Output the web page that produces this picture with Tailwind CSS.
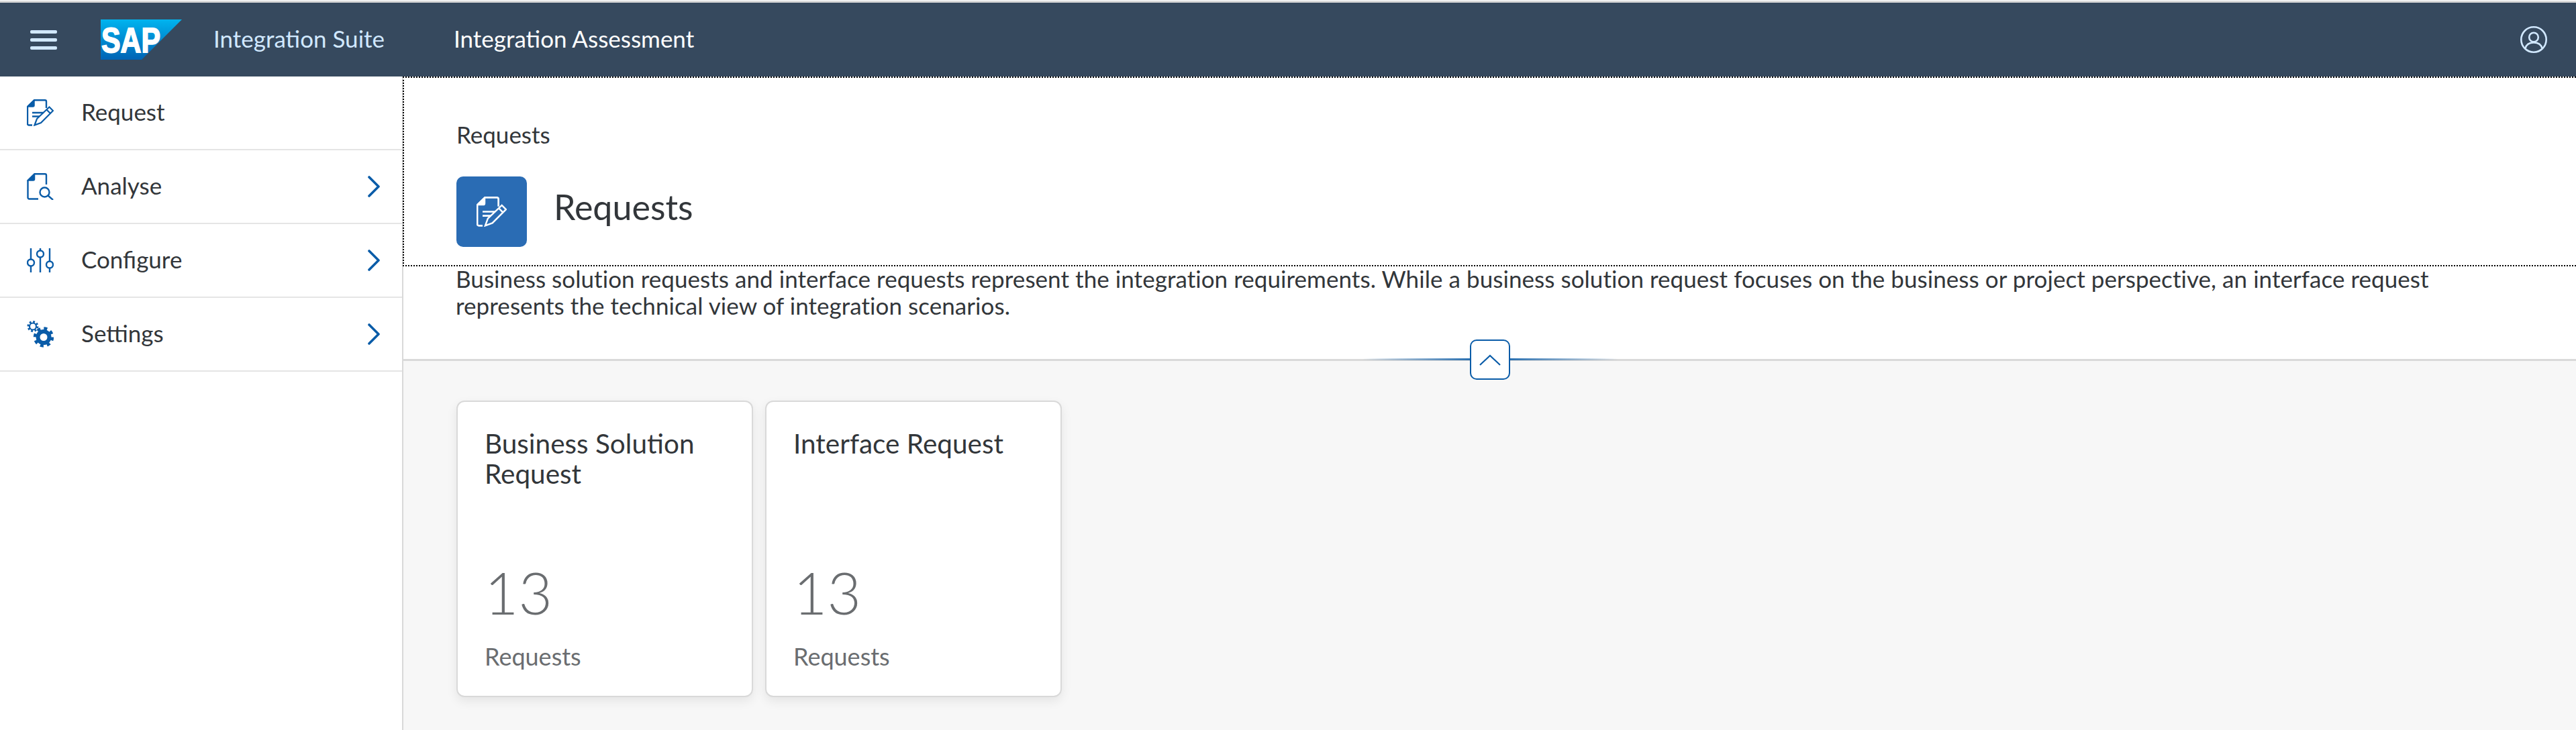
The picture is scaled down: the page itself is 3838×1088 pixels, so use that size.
<!DOCTYPE html>
<html lang="en">
<head>
  <meta charset="UTF-8">
  <title>Integration Assessment</title>
  <script src="https://cdn.jsdelivr.net/npm/@tailwindcss/browser@4"></script>
</head>
<body class="h-screen overflow-hidden bg-white font-['Lato',sans-serif] text-[#32363a]">
  <svg class="hidden">
    <symbol id="icon-request" viewBox="0 0 40 40">
      <path d="M8 38.5H3a2 2 0 0 1-2-2V11L11 1.3H27a2 2 0 0 1 2 2V13" fill="none" stroke="currentColor" stroke-width="2.4"/>
      <path d="M1 11 11 1V9a2 2 0 0 1-2 2Z" fill="currentColor" stroke="currentColor" stroke-width="1.5"/>
      <path d="M8 20H25M8 25.500H19" stroke="currentColor" stroke-width="2.4"/>
      <path d="M11.500 38.500 15 29 33.500 11.500 39 17 21 35ZM29.500 15.500 35 21" fill="none" stroke="currentColor" stroke-width="2.2"/>
    </symbol>
  </svg>

  <div class="h-[4px] border-t border-t-white bg-[#d9d9d9]"></div>

  <header class="flex h-[110px] items-center bg-[#36495e] text-[35px]">
    <button class="ml-[45px] flex w-[40px] flex-col gap-[7px]">
      <span class="h-[5px] rounded-[2px] bg-[#d1e8ff]"></span>
      <span class="h-[5px] rounded-[2px] bg-[#d1e8ff]"></span>
      <span class="h-[5px] rounded-[2px] bg-[#d1e8ff]"></span>
    </button>
    <svg class="ml-[65px]" width="121" height="60" viewBox="0 0 121 60">
      <defs>
        <linearGradient id="sapBlue" x1="0" y1="0" x2="0" y2="1">
          <stop offset="0" stop-color="#00b4ef"/>
          <stop offset="1" stop-color="#0063b4"/>
        </linearGradient>
      </defs>
      <path d="M0 0H121L61 60H0Z" fill="url(#sapBlue)"/>
      <text x="1" y="49" fill="#fff" font-family="Liberation Sans" font-weight="700" font-size="51" textLength="88" lengthAdjust="spacingAndGlyphs" stroke="#fff" stroke-width="1.800">SAP</text>
    </svg>
    <span class="mb-[3px] ml-[47px] text-[#d1e8ff]">Integration Suite</span>
    <span class="mb-[3px] ml-[103px] text-white">Integration Assessment</span>
    <svg class="mr-[43px] ml-auto" width="40" height="40" viewBox="0 0 40 40" fill="none" stroke="#d1e8ff" stroke-width="2.600">
      <circle cx="20" cy="20" r="18.700"/>
      <circle cx="20" cy="16.500" r="6.800"/>
      <path d="M7.500 33C9 27 14 24.500 20 24.500S31 27 32.500 33"/>
    </svg>
  </header>

  <div class="flex h-[974px]">
    <nav class="w-[601px] shrink-0 border-r-2 border-r-[#d9d9d9] text-[35px]">
      <a class="flex h-[110px] items-center border-b-2 border-b-[#e5e5e5] pl-[40px] text-[#32363a]">
        <svg class="text-[#0a5ca8]" width="40" height="40"><use href="#icon-request"/></svg>
        <span class="mb-[4px] ml-[41px]">Request</span>
      </a>
      <a class="flex h-[110px] items-center border-b-2 border-b-[#e5e5e5] pl-[40px]">
        <svg width="40" height="40" viewBox="0 0 40 40" fill="none" stroke="#0a5ca8" stroke-width="2.400">
          <path d="M17 38.500H3.500a2 2 0 0 1-2-2V11L11.500 1.300H27a2 2 0 0 1 2 2V17"/>
          <path d="M1.500 11 11.500 1V9a2 2 0 0 1-2 2Z" fill="#0a5ca8" stroke-width="1.500"/>
          <circle cx="26.500" cy="28.500" r="7"/>
          <path d="M31.500 33.500 39 40"/>
        </svg>
        <span class="mb-[4px] ml-[41px]">Analyse</span>
        <svg class="mr-[33px] ml-auto" width="18" height="32" viewBox="0 0 18 32" fill="none" stroke="#0a5ca8" stroke-width="3.600" stroke-linecap="round" stroke-linejoin="round"><path d="M2 2 16 16 2 30"/></svg>
      </a>
      <a class="flex h-[110px] items-center border-b-2 border-b-[#e5e5e5] pl-[40px]">
        <svg width="40" height="36" viewBox="0 0 40 36" fill="none" stroke="#0a5ca8" stroke-width="2.400">
          <path d="M6 0V16M6 27V36M20 0V3M20 14V36M34 0V19M34 30V36"/>
          <circle cx="6" cy="21.500" r="5"/>
          <circle cx="20" cy="8.500" r="5"/>
          <circle cx="34" cy="24.500" r="5"/>
        </svg>
        <span class="mb-[4px] ml-[41px]">Configure</span>
        <svg class="mr-[33px] ml-auto" width="18" height="32" viewBox="0 0 18 32" fill="none" stroke="#0a5ca8" stroke-width="3.600" stroke-linecap="round" stroke-linejoin="round"><path d="M2 2 16 16 2 30"/></svg>
      </a>
      <a class="flex h-[110px] items-center border-b-2 border-b-[#e5e5e5] pl-[40px]">
        <svg width="40" height="40" viewBox="0 0 40 40" fill="none" stroke="#0a5ca8">
          <circle cx="9" cy="8.500" r="5" stroke-width="2.200"/>
          <circle cx="9" cy="8.500" r="7" stroke-width="3" stroke-dasharray="2.750 2.750"/>
          <circle cx="25" cy="24.500" r="8.500" stroke-width="6"/>
          <circle cx="25" cy="24.500" r="13" stroke-width="4.500" stroke-dasharray="5 5.200"/>
        </svg>
        <span class="mb-[4px] ml-[41px]">Settings</span>
        <svg class="mr-[33px] ml-auto" width="18" height="32" viewBox="0 0 18 32" fill="none" stroke="#0a5ca8" stroke-width="3.600" stroke-linecap="round" stroke-linejoin="round"><path d="M2 2 16 16 2 30"/></svg>
      </a>
    </nav>

    <main class="min-w-0 flex-1 bg-[#f7f7f7]">
      <section class="relative h-[424px] border-b-[3px] border-b-[#d9d9d9] bg-white">
        <div class="-ml-px h-[283px] border-y-2 border-l-2 border-dotted border-black pt-[62px] pl-[78px]">
          <p class="h-[44px] text-[35px] leading-[44px]">Requests</p>
          <div class="mt-[41px] flex items-center">
            <div class="flex h-[105px] w-[105px] items-center justify-center rounded-[10px] bg-[#2a6cb4] text-white">
              <svg width="45" height="45"><use href="#icon-request"/></svg>
            </div>
            <h1 class="mb-[15px] ml-[40px] text-[52px]">Requests</h1>
          </div>
        </div>
        <p class="-mt-[2px] pl-[78px] text-[35px] leading-[40px] tracking-[0.055px] whitespace-nowrap">Business solution requests and interface requests represent the integration requirements. While a business solution request focuses on the business or project perspective, an interface request<br>represents the technical view of integration scenarios.</p>

        <div class="absolute top-[420px] left-[1429px] h-[3px] w-[380px] bg-gradient-to-r from-transparent via-[#0a5ca8] to-transparent"></div>
        <button class="absolute top-[392px] left-[1589px] flex h-[60px] w-[60px] items-center justify-center rounded-[10px] border-[2.5px] border-[#0a5ca8] bg-white">
          <svg width="32" height="17" viewBox="0 0 32 17" fill="none" stroke="#0a5ca8" stroke-width="2.200"><path d="M1 16 16 2 31 16"/></svg>
        </button>
      </section>

      <div class="flex gap-[18px] pt-[59px] pl-[79px]">
        <article class="flex h-[442px] w-[442px] flex-col rounded-[12px] border-2 border-[#d9d9d9] bg-white px-[40px] shadow-[0_6px_16px_rgba(0,0,0,0.08)]">
          <h2 class="mt-[39px] h-[184px] text-[40.5px] leading-[45px]">Business Solution Request</h2>
          <div class="mt-[11px] text-[87px] leading-[100px] font-light text-[#6a6d70]">13</div>
          <div class="mt-[23px] text-[36px] leading-[44px] text-[#6a6d70]">Requests</div>
        </article>
        <article class="flex h-[442px] w-[442px] flex-col rounded-[12px] border-2 border-[#d9d9d9] bg-white px-[40px] shadow-[0_6px_16px_rgba(0,0,0,0.08)]">
          <h2 class="mt-[39px] h-[184px] text-[40.5px] leading-[45px]">Interface Request</h2>
          <div class="mt-[11px] text-[87px] leading-[100px] font-light text-[#6a6d70]">13</div>
          <div class="mt-[23px] text-[36px] leading-[44px] text-[#6a6d70]">Requests</div>
        </article>
      </div>
    </main>
  </div>
</body>
</html>
